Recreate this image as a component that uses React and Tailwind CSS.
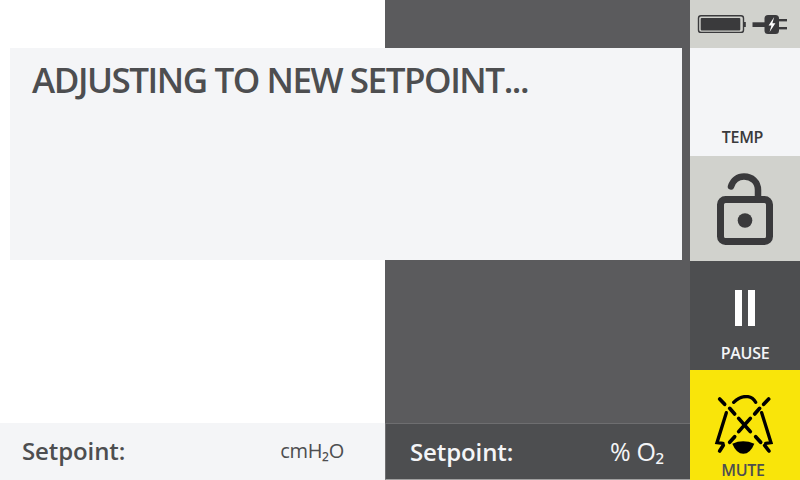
const font = { fontFamily: '"Open Sans", sans-serif' };

function BatteryIcon() {
  return (
    <svg width="92" height="20" viewBox="697 11 92 20" fill="none">
      <rect x="698.5" y="12.8" width="45" height="16.6" rx="2.5" stroke="#3a3a3c" strokeWidth="1.4" />
      <rect x="700.7" y="15" width="39.6" height="12.4" rx="1" fill="#3a3a3c" />
      <rect x="743.6" y="19" width="2.2" height="5" fill="#3a3a3c" />
      <rect x="752.5" y="19.3" width="12.5" height="4.7" fill="#3a3a3c" />
      <rect x="764.5" y="12" width="14.5" height="19" rx="3.5" fill="#3a3a3c" />
      <rect x="778" y="16" width="9" height="2.4" fill="#3a3a3c" />
      <rect x="778" y="24" width="9" height="2.4" fill="#3a3a3c" />
      <path d="M774.2 14 L768.6 22.6 L771.4 22.6 L769.6 29 L775.4 20.2 L772.4 20.2 Z" fill="#fff" />
    </svg>
  );
}

function LockIcon() {
  return (
    <svg width="60" height="76" viewBox="0 0 60 76" fill="none">
      <rect x="5.5" y="27.5" width="49" height="42" rx="5" stroke="#3a3a3c" strokeWidth="7" />
      <path d="M16 14.5 C18 8 23 4.5 29 4.5 C37 4.5 43 10 43 18 L43 27" stroke="#3a3a3c" strokeWidth="6.5" strokeLinecap="round" />
      <circle cx="30" cy="48.5" r="7.3" fill="#3a3a3c" />
    </svg>
  );
}

function PauseIcon() {
  return (
    <div className="flex gap-[5.5px]">
      <div className="w-[7.7px] h-[36px] bg-white" />
      <div className="w-[7.7px] h-[36px] bg-white" />
    </div>
  );
}

function MuteIcon() {
  return (
    <svg width="60" height="60" viewBox="100 90 180 180" fill="none" stroke="#000" strokeLinecap="round">
      <g strokeWidth="11">
        <path d="M120 102 L135 118" />
        <path d="M150 130 L165 147" />
        <path d="M177 160 L212 200" />
        <path d="M212 160 L177 200" />
        <path d="M228 215 L243 232" />
        <path d="M255 241 L268 258" />
        <path d="M267 102 L252 118" />
        <path d="M240 130 L225 147" />
        <path d="M165 215 L150 232" />
        <path d="M131 241 L120 258" />
      </g>
      <g strokeWidth="10">
        <path d="M162 112 Q182 92 205 95 Q220 97 228 112" />
        <path d="M140 143 L112 233 L130 235" />
        <path d="M246 143 L274 233 L258 235" />
      </g>
      <path d="M158 236 Q190 222 224 236 Q212 266 191 266 Q170 266 158 236 Z" fill="#000" stroke="none" />
    </svg>
  );
}

export default function App() {
  return (
    <div className="relative flex w-[800px] h-[480px] overflow-hidden bg-white" style={font}>
      <div className="flex flex-col w-[690px] h-full">
        <div className="flex flex-1">
          <div className="w-[385px] bg-white" />
          <div className="flex-1 bg-[#5b5b5d]" />
        </div>
        <div className="flex h-[57px]">
          <div className="flex items-center justify-between w-[385px] pl-[22px] pr-[41px] pb-[1px] bg-[#f4f5f7] text-[#4d4e50]">
            <span className="text-[24px] font-semibold tracking-[-0.1px]">Setpoint:</span>
            <span className="text-[20px] font-medium tracking-[-0.3px]">cmH₂O</span>
          </div>
          <div className="flex items-center justify-between flex-1 pl-[24px] pr-[26px] bg-[#4d4e50] text-[#f4f5f7] border-t border-t-[#6e6e70] border-l border-l-[#6e6e70] border-b border-b-[#a0a0a0]">
            <span className="text-[24px] font-semibold tracking-[-0.1px]">Setpoint:</span>
            <span className="text-[25px] font-medium tracking-[-0.3px]">% O₂</span>
          </div>
        </div>
      </div>

      <div className="flex flex-col w-[110px] h-full">
        <div className="flex items-center justify-center h-[48px] pr-[4px] bg-[#d1d2cd]">
          <BatteryIcon />
        </div>
        <div className="flex items-end justify-center h-[108px] pb-[9px] pr-[5px] bg-[#f4f5f7] text-[#3a3a3c] text-[16px] font-semibold leading-[20px] tracking-[-0.3px]">
          TEMP
        </div>
        <div className="flex items-center justify-center h-[105px] pt-[3px] bg-[#d1d2cd]">
          <LockIcon />
        </div>
        <div className="flex flex-col items-center h-[109px] pt-[29px] bg-[#4d4e50] text-[#f4f5f7] text-[16px] font-semibold leading-[20px] tracking-[-0.3px]">
          <PauseIcon />
          <span className="mt-[17px]">PAUSE</span>
        </div>
        <div className="flex flex-col items-center h-[110px] pt-[25px] pr-[4px] bg-[#f9e50a] text-[#4d4e50] text-[16px] font-semibold leading-[20px] tracking-[-0.3px]">
          <MuteIcon />
          <span className="mt-[5px]">MUTE</span>
        </div>
      </div>

      <div className="absolute left-[10px] top-[48px] w-[672px] h-[212px] pl-[22px] pt-[8px] bg-[#f4f5f7] text-[#4d4e50] text-[35px] font-semibold leading-[48px] tracking-[-1.45px]">
        ADJUSTING TO NEW SETPOINT...
      </div>
    </div>
  );
}
